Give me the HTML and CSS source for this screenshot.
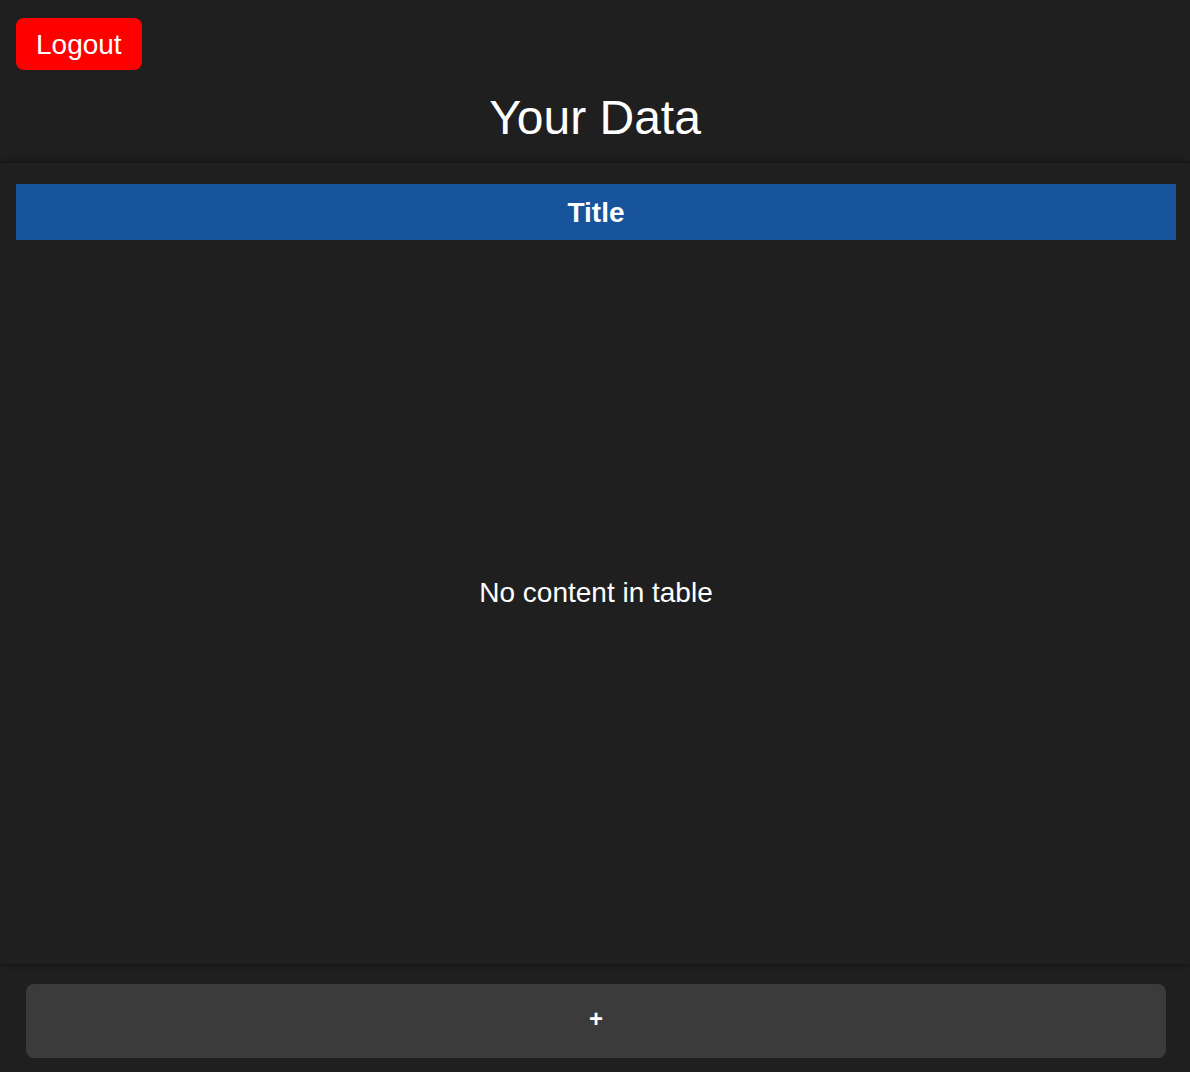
FILE: index.html
```html
<!DOCTYPE html>
<html lang="en">
<head>
<meta charset="utf-8">
<title>Your Data</title>
<link rel="stylesheet" href="styles.css">
</head>
<body>
<div class="app">
  <header class="top">
    <div class="top-bar">
      <button class="logout">Logout</button>
    </div>
    <h1 class="page-title">Your Data</h1>
  </header>
  <main class="panel">
    <div class="table">
      <div class="table-head">Title</div>
      <div class="table-empty">No content in table</div>
    </div>
  </main>
  <footer class="footer">
    <button class="add">+</button>
  </footer>
</div>
</body>
</html>
```

FILE: styles.css
```css
html, body {
  margin: 0;
  padding: 0;
  background: #1f1f1f;
  color: #ffffff;
  font-family: "Liberation Sans", Arial, sans-serif;
}

.app {
  height: 1072px;
  display: flex;
  flex-direction: column;
  overflow: hidden;
}

.top {
  padding: 18px 16px 0;
}

.top-bar {
  display: flex;
}

.logout {
  height: 52px;
  padding: 2px 20px 0;
  background: #ff0000;
  color: #ffffff;
  border: none;
  border-radius: 8px;
  font-family: "Liberation Sans", Arial, sans-serif;
  font-size: 28px;
  line-height: 50px;
}

.page-title {
  margin: 20px 0 18px;
  font-size: 48px;
  font-weight: normal;
  line-height: 55px;
  text-align: center;
}

.panel {
  height: 801px;
  flex: none;
  box-sizing: border-box;
  padding: 21px 14px 0 16px;
  background: #1f1f1f;
  box-shadow: 0 0 7px rgba(0, 0, 0, 0.55);
  position: relative;
  z-index: 1;
  display: flex;
  flex-direction: column;
}

.table {
  flex: 1;
  display: flex;
  flex-direction: column;
}

.table-head {
  height: 56px;
  box-sizing: border-box;
  padding-top: 1px;
  background: #17549b;
  font-size: 28px;
  font-weight: bold;
  line-height: 55px;
  text-align: center;
}

.table-empty {
  flex: 1;
  display: flex;
  align-items: center;
  justify-content: center;
  padding-bottom: 18px;
  font-size: 28px;
}

.footer {
  flex: 1;
  padding: 20px 24px 14px 26px;
  display: flex;
}

.add {
  flex: 1;
  height: 74px;
  padding: 0 0 4px;
  background: #3b3b3b;
  color: #ffffff;
  border: none;
  border-radius: 8px;
  font-family: "Liberation Sans", Arial, sans-serif;
  font-size: 24px;
  font-weight: bold;
}
```
